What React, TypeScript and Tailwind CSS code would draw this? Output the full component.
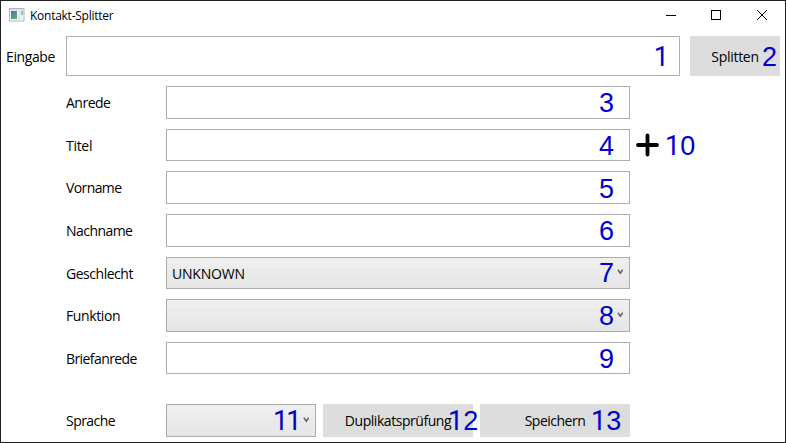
import type { ReactNode } from "react";

function Digits({ n }: { n: number }) {
  const chars = String(n).split("");
  return (
    <>
      {chars.map((c, i) =>
        c === "1" ? (
          <span key={i} className={`font-[Roboto,sans-serif] ${chars[i + 1] === "1" ? "tracking-[-2px]" : ""}`}>
            {c}
          </span>
        ) : (
          c
        ),
      )}
    </>
  );
}

function Mark({ n, className }: { n: number; className: string }) {
  return (
    <span
      className={`absolute top-1/2 -translate-y-1/2 whitespace-nowrap font-['Liberation_Sans',Arial,sans-serif] text-[27px] leading-[27px] tracking-normal text-[#0000d2] ${className}`}
    >
      <Digits n={n} />
    </span>
  );
}

function Chevron({ top }: { top: string }) {
  return (
    <svg className={`absolute right-[6px] ${top}`} width="6" height="6" viewBox="0 0 6 6" fill="none" stroke="#606060" strokeWidth="1.5">
      <path d="M0.9 0.8 L3.3 4.1 L5.7 0.8" />
    </svg>
  );
}

function Field({ height, children }: { height: string; children?: ReactNode }) {
  return <div className={`relative w-[464px] shrink-0 border border-[#abadb3] bg-white ${height}`}>{children}</div>;
}

function Combo({ size, chevronTop, children }: { size: string; chevronTop: string; children?: ReactNode }) {
  return (
    <div className={`relative flex shrink-0 items-center border border-[#acacac] bg-linear-to-b from-[#f0f0f0] to-[#e5e5e5] pl-[5px] ${size}`}>
      {children}
      <Chevron top={chevronTop} />
    </div>
  );
}

function Row({ label, tracking, className, children }: { label: string; tracking: string; className: string; children: ReactNode }) {
  return (
    <div className={`flex items-center pl-[65px] ${className}`}>
      <div className={`w-[100px] shrink-0 whitespace-nowrap pt-px ${tracking}`}>{label}</div>
      {children}
    </div>
  );
}

export default function App() {
  return (
    <div className="flex h-[443px] w-[786px] flex-col overflow-hidden border border-[#232023] bg-white font-['Open_Sans','Noto_Sans',sans-serif] text-[14px] leading-5 text-black">
      <header className="flex h-[30px] shrink-0 items-center pl-2">
        <svg className="-mt-[2px]" width="16" height="14" viewBox="0 0 16 14">
          <defs>
            <linearGradient id="pane" x1="0" y1="0" x2="0.6" y2="1">
              <stop offset="0" stopColor="#4776a8" />
              <stop offset="1" stopColor="#58ad78" />
            </linearGradient>
          </defs>
          <rect x="0.5" y="0.5" width="14.5" height="12.5" fill="#f5f6f7" stroke="#b4b8bd" />
          <rect x="1" y="1" width="13.5" height="1.5" fill="#d5d9dd" />
          <rect x="2" y="3" width="6" height="8" fill="url(#pane)" />
          <rect x="9" y="3" width="3" height="8" fill="#e2e6e9" />
          <rect x="12.3" y="3" width="1.7" height="4" fill="#8fb8b4" />
        </svg>
        <span className="ml-[5px] text-[12px] tracking-[-0.26px]">Kontakt-Splitter</span>
        <svg className="ml-auto" width="137" height="28" viewBox="0 0 137 28" fill="none" stroke="#000">
          <path d="M18 13.5 H28" shapeRendering="crispEdges" />
          <rect x="63.5" y="8.5" width="9" height="9" shapeRendering="crispEdges" />
          <path d="M109 8 L119 18 M119 8 L109 18" />
        </svg>
      </header>

      <div className="mt-[5px] flex h-10 shrink-0 items-center">
        <div className="w-[65px] shrink-0 pl-[5px] pt-[2px] tracking-[-0.4px]">Eingabe</div>
        <div className="relative h-10 w-[614px] shrink-0 border border-[#abadb3]">
          <Mark n={1} className="right-[10px] mt-px" />
        </div>
        <div className="relative ml-[10px] flex h-10 w-[90px] items-center justify-center bg-[#dddddd] pt-[2px] tracking-[-0.3px]">
          Splitten
          <Mark n={2} className="right-[3px] mt-px" />
        </div>
      </div>

      <Row label="Anrede" tracking="tracking-[-0.5px]" className="mt-[10px]">
        <Field height="h-[33px]"><Mark n={3} className="right-[15px]" /></Field>
      </Row>
      <Row label="Titel" tracking="tracking-[-0.3px]" className="mt-[10px]">
        <Field height="h-[32px]"><Mark n={4} className="right-[15px] mt-px" /></Field>
        <svg className="ml-[6px]" width="24" height="24" viewBox="0 0 24 24" stroke="#000" strokeWidth="3.8" strokeLinecap="round">
          <path d="M2 12 H21 M11.5 2.5 V21.5" />
        </svg>
        <span className="ml-[5px] pt-[3px] font-['Liberation_Sans',Arial,sans-serif] text-[27px] leading-[27px] text-[#0000d2]">
          <Digits n={10} />
        </span>
      </Row>
      <Row label="Vorname" tracking="tracking-[-0.6px]" className="mt-[10px]">
        <Field height="h-[33px]"><Mark n={5} className="right-[15px] mt-px" /></Field>
      </Row>
      <Row label="Nachname" tracking="tracking-[-0.55px]" className="mt-[10px]">
        <Field height="h-[33px]"><Mark n={6} className="right-[15px]" /></Field>
      </Row>
      <Row label="Geschlecht" tracking="tracking-[-0.47px]" className="mt-[10px]">
        <Combo size="h-[32px] w-[464px]" chevronTop="top-[11px]">
          <span className="pt-px tracking-[-0.2px]">UNKNOWN</span>
          <Mark n={7} className="right-[15px]" />
        </Combo>
      </Row>
      <Row label="Funktion" tracking="tracking-[-0.4px]" className="mt-[10px]">
        <Combo size="h-[33px] w-[464px]" chevronTop="top-[12px]"><Mark n={8} className="right-[15px]" /></Combo>
      </Row>
      <Row label="Briefanrede" tracking="tracking-[-0.58px]" className="mt-[10px]">
        <Field height="h-[32px]"><Mark n={9} className="right-[15px] mt-px" /></Field>
      </Row>

      <Row label="Sprache" tracking="tracking-[-0.55px]" className="mt-[30px]">
        <Combo size="h-[33px] w-[150px]" chevronTop="top-[12px]"><Mark n={11} className="left-[106px]" /></Combo>
        <div className="relative ml-[7px] flex h-[33px] w-[150px] shrink-0 items-center justify-center bg-[#dddddd] pt-px tracking-[-0.45px]">
          Duplikatsprüfung
          <Mark n={12} className="left-[125px] z-10" />
        </div>
        <div className="relative ml-[7px] flex h-[33px] w-[150px] shrink-0 items-center justify-center bg-[#dddddd] pt-px tracking-[-0.5px]">
          Speichern
          <Mark n={13} className="left-[111px]" />
        </div>
      </Row>
    </div>
  );
}
